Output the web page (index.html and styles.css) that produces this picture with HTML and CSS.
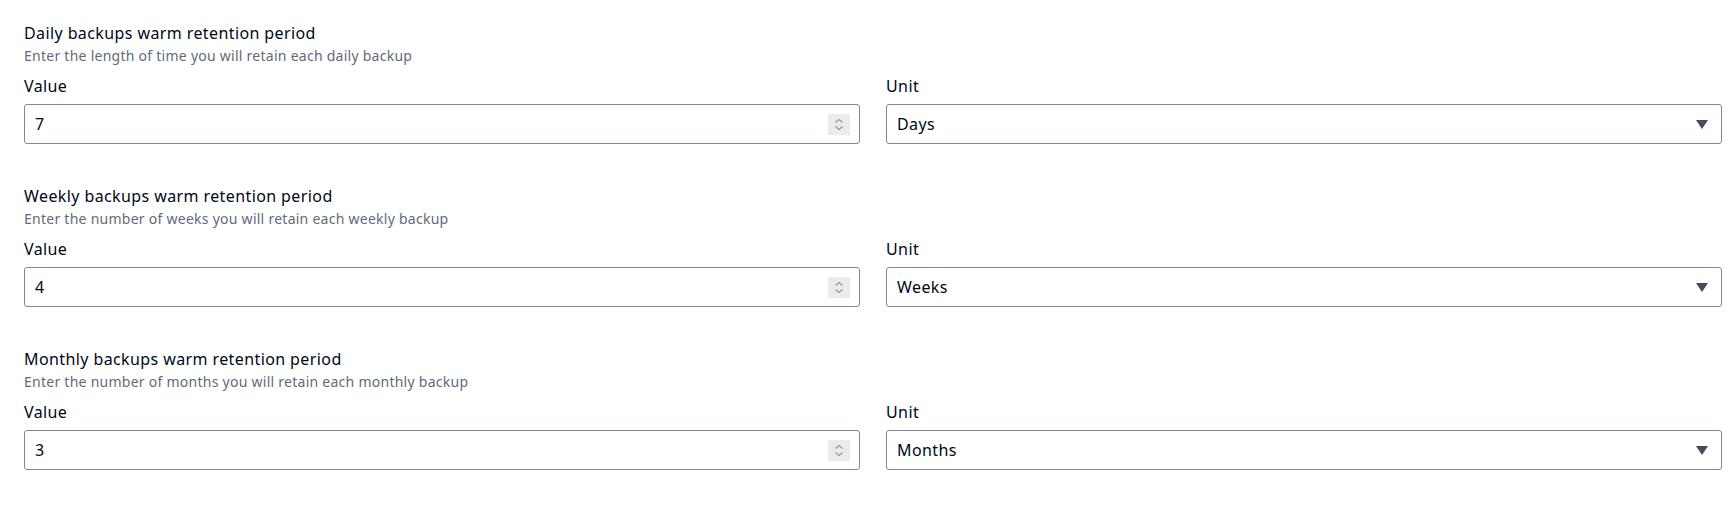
FILE: index.html
```html
<!DOCTYPE html>
<html lang="en">
<head>
<meta charset="utf-8">
<title>Retention periods</title>
<link rel="stylesheet" href="styles.css">
</head>
<body>
<div class="form">
  <section class="group">
    <h3 class="title">Daily backups warm retention period</h3>
    <p class="desc">Enter the length of time you will retain each daily backup</p>
    <div class="fields">
      <div class="field">
        <label class="label">Value</label>
        <div class="input">
          <span class="val">7</span>
          <span class="spin"><svg width="10" height="13" viewBox="0 0 10 13"><path d="M1.5 4.5 L5 1.5 L8.5 4.5 M1.5 8.5 L5 11.5 L8.5 8.5" fill="none" stroke="#8c95a1" stroke-width="1.1"/></svg></span>
        </div>
      </div>
      <div class="field">
        <label class="label">Unit</label>
        <div class="select">
          <span class="val">Days</span>
          <svg class="caret" width="12" height="9" viewBox="0 0 12 9"><path d="M0 0 H12 L6 9 Z" fill="#414d5c"/></svg>
        </div>
      </div>
    </div>
  </section>
  <section class="group">
    <h3 class="title">Weekly backups warm retention period</h3>
    <p class="desc">Enter the number of weeks you will retain each weekly backup</p>
    <div class="fields">
      <div class="field">
        <label class="label">Value</label>
        <div class="input">
          <span class="val">4</span>
          <span class="spin"><svg width="10" height="13" viewBox="0 0 10 13"><path d="M1.5 4.5 L5 1.5 L8.5 4.5 M1.5 8.5 L5 11.5 L8.5 8.5" fill="none" stroke="#8c95a1" stroke-width="1.1"/></svg></span>
        </div>
      </div>
      <div class="field">
        <label class="label">Unit</label>
        <div class="select">
          <span class="val">Weeks</span>
          <svg class="caret" width="12" height="9" viewBox="0 0 12 9"><path d="M0 0 H12 L6 9 Z" fill="#414d5c"/></svg>
        </div>
      </div>
    </div>
  </section>
  <section class="group">
    <h3 class="title">Monthly backups warm retention period</h3>
    <p class="desc">Enter the number of months you will retain each monthly backup</p>
    <div class="fields">
      <div class="field">
        <label class="label">Value</label>
        <div class="input">
          <span class="val">3</span>
          <span class="spin"><svg width="10" height="13" viewBox="0 0 10 13"><path d="M1.5 4.5 L5 1.5 L8.5 4.5 M1.5 8.5 L5 11.5 L8.5 8.5" fill="none" stroke="#8c95a1" stroke-width="1.1"/></svg></span>
        </div>
      </div>
      <div class="field">
        <label class="label">Unit</label>
        <div class="select">
          <span class="val">Months</span>
          <svg class="caret" width="12" height="9" viewBox="0 0 12 9"><path d="M0 0 H12 L6 9 Z" fill="#414d5c"/></svg>
        </div>
      </div>
    </div>
  </section>
</div>
</body>
</html>
```
FILE: styles.css
```css
html, body {
  margin: 0;
  padding: 0;
  background: #ffffff;
}
body {
  font-family: "Noto Sans", "Open Sans", Arial, sans-serif;
  color: #000716;
}
.form {
  padding: 21px 10px 0 24px;
  display: flex;
  flex-direction: column;
  gap: 40px;
}
.group {
  display: flex;
  flex-direction: column;
}
.title {
  margin: 0;
  font-size: 16px;
  line-height: 24px;
  font-weight: 400;
  letter-spacing: 0.4px;
  color: #000716;
}
.desc {
  margin: 0;
  font-size: 14px;
  line-height: 22px;
  letter-spacing: 0.26px;
  color: #5f6b7a;
}
.fields {
  margin-top: 7px;
  display: grid;
  grid-template-columns: 1fr 1fr;
  column-gap: 26px;
}
.field {
  display: flex;
  flex-direction: column;
  gap: 6px;
}
.label {
  font-size: 16px;
  line-height: 24px;
  letter-spacing: 0.4px;
  color: #000716;
}
.input, .select {
  box-sizing: border-box;
  height: 40px;
  border: 1px solid #7d8998;
  border-radius: 3px;
  display: flex;
  align-items: center;
  justify-content: space-between;
  padding: 0 9px 0 10px;
  font-size: 16px;
  letter-spacing: 0.4px;
  color: #000716;
}
.spin {
  width: 22px;
  height: 21px;
  background: #e9ebed;
  display: flex;
  align-items: center;
  justify-content: center;
}
.select {
  padding-right: 13px;
}
.caret {
  display: block;
}
```
